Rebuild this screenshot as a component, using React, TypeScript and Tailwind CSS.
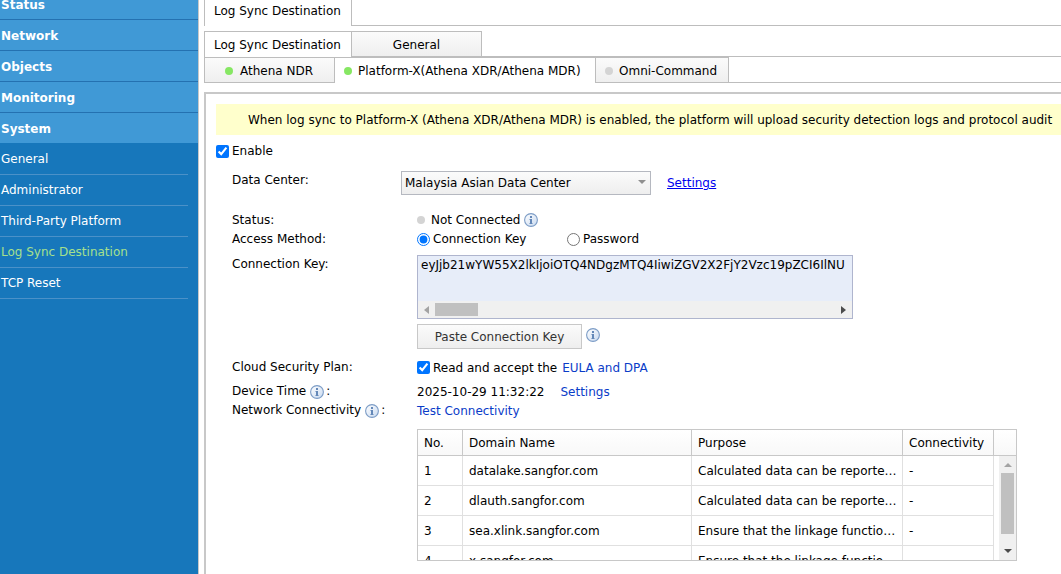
import type { ReactNode } from 'react'
import { clsx } from 'clsx'

const menus = ['Status', 'Network', 'Objects', 'Monitoring', 'System']

const subMenus = [
  'General',
  'Administrator',
  'Third-Party Platform',
  'Log Sync Destination',
  'TCP Reset',
]

const domains = [
  { no: 1, name: 'datalake.sangfor.com', purpose: 'Calculated data can be reported here' },
  { no: 2, name: 'dlauth.sangfor.com', purpose: 'Calculated data can be reported here' },
  { no: 3, name: 'sea.xlink.sangfor.com', purpose: 'Ensure that the linkage functions work' },
  { no: 4, name: 'x.sangfor.com', purpose: 'Ensure that the linkage functions work' },
]

function Sidebar() {
  return (
    <aside className="w-[199px] shrink-0 border-r border-[#c8c8c8] bg-[#1777bb] text-white">
      <nav aria-label="Main menu">
        <ul className="-mt-3">
          {menus.map((item) => (
            <li key={item} className="h-[31px] border-t border-[#2471b1] bg-[#4099d6]">
              <a href="#" className="flex h-full items-center px-px pt-px font-bold">
                {item}
              </a>
            </li>
          ))}
        </ul>
        <ul className="mr-[10px] pt-px">
          {subMenus.map((item) => (
            <li key={item} className="h-[31px] border-b border-[#4b91c8]">
              <a
                href="#"
                className={clsx(
                  'flex h-full items-center px-px',
                  item === 'Log Sync Destination' && 'text-[#a5e08c]',
                )}
              >
                {item}
              </a>
            </li>
          ))}
        </ul>
      </nav>
    </aside>
  )
}

function Dot({ on }: { on?: boolean }) {
  return <span className={clsx('size-2 shrink-0 rounded-full', on ? 'bg-[#86e763]' : 'bg-[#d4d4d4]')} />
}

function InfoIcon() {
  return (
    <svg viewBox="0 0 14 14" className="size-[14px] shrink-0" aria-hidden="true">
      <defs>
        <linearGradient id="info-fill" x1="0" y1="0" x2="1" y2="1">
          <stop offset="0" stopColor="#ffffff" />
          <stop offset="1" stopColor="#c9daf0" />
        </linearGradient>
      </defs>
      <circle cx="7" cy="7" r="6.4" fill="url(#info-fill)" stroke="#7c9cc6" strokeWidth="1.1" />
      <rect x="6" y="3" width="2" height="2" fill="#6488b8" />
      <path d="M5.5 6H8v4h.5v1h-3v-1H6V7h-.5z" fill="#6488b8" />
    </svg>
  )
}

function Row({ label, className, children }: { label: ReactNode; className?: string; children: ReactNode }) {
  return (
    <div className={clsx('flex', className)}>
      <div className="flex w-[185px] shrink-0 items-center self-start leading-[19px]">{label}</div>
      {children}
    </div>
  )
}

function InfoLabel({ text }: { text: string }) {
  return (
    <>
      <span className="mr-1">{text}</span>
      <InfoIcon />
      <span className="ml-[2px]">:</span>
    </>
  )
}

function Tabs() {
  const idle = 'border-b border-[#bdbdbd] bg-linear-to-b from-[#fbfbfb] to-[#efefef]'

  return (
    <div>
      <div className="flex h-[26px]">
        <div className="w-[148px] border-x border-[#bdbdbd] pl-[9px] leading-[22px]">Log Sync Destination</div>
        <div className="flex-1 border-b border-[#bdbdbd]" />
      </div>
      <div className="mt-[5px] flex h-[26px]" role="tablist">
        <button role="tab" aria-selected className="w-[147px] border-t border-l border-[#bdbdbd] pl-[9px] text-left">
          Log Sync Destination
        </button>
        <button role="tab" aria-selected={false} className={clsx('w-[131px] border-x border-t pt-px', idle)}>
          General
        </button>
        <div className="flex-1 border-b border-[#bdbdbd]" />
      </div>
      <div className="flex h-[26px]" role="tablist">
        <button
          role="tab"
          aria-selected={false}
          className={clsx('flex w-[131px] items-center gap-[7px] border-x border-t pt-px pl-5', idle)}
        >
          <Dot on />
          Athena NDR
        </button>
        <button
          role="tab"
          aria-selected
          className="flex w-[260px] items-center gap-[6px] border-t border-[#bdbdbd] pl-[9px] whitespace-nowrap"
        >
          <Dot on />
          Platform-X(Athena XDR/Athena MDR)
        </button>
        <button
          role="tab"
          aria-selected={false}
          className={clsx('flex w-[134px] items-center gap-[6px] border-x border-t pt-px pl-[9px]', idle)}
        >
          <Dot />
          Omni-Command
        </button>
        <div className="flex-1 border-b border-[#bdbdbd]" />
      </div>
    </div>
  )
}

function ConnectionKey() {
  return (
    <div className="w-[436px] border border-[#afb5ce] bg-[#e7edf9]">
      <textarea
        id="connection-key"
        wrap="off"
        rows={1}
        readOnly
        className="block h-[45px] w-full resize-none overflow-hidden bg-transparent pl-[3px] text-[12px] leading-[18px] outline-none"
        defaultValue="eyJjb21wYW55X2lkIjoiOTQ4NDgzMTQ4IiwiZGV2X2FjY2Vzc19pZCI6IlNU"
      />
      <div className="flex h-[17px] items-center bg-[#f0f0f0] px-[6px]">
        <svg viewBox="0 0 5 8" className="h-2 w-[5px]" aria-hidden="true">
          <path d="M5 0v8L0 4z" fill="#a3a3a3" />
        </svg>
        <div className="ml-[6px] h-[13px] w-[43px] bg-[#c0c0c0]" />
        <svg viewBox="0 0 5 8" className="ml-auto h-2 w-[5px]" aria-hidden="true">
          <path d="M0 0v8l5-4z" fill="#4c4c4c" />
        </svg>
      </div>
    </div>
  )
}

function DomainTable() {
  const head = 'border-r border-b border-[#c8c8c8] pt-px pl-[6px] text-left font-normal'
  const cell = 'truncate border-r border-b border-[#e0e0e0] pl-[6px]'

  return (
    <div className="flex h-[132px] w-[600px] overflow-hidden border border-[#c8c8c8]">
      <table className="w-[576px] table-fixed border-separate border-spacing-0 self-start">
        <colgroup>
          <col className="w-[45px]" />
          <col className="w-[229px]" />
          <col className="w-[211px]" />
          <col className="w-[91px]" />
        </colgroup>
        <thead>
          <tr className="h-[26px] bg-linear-to-b from-white to-[#f8f8f8]">
            <th className={head}>No.</th>
            <th className={head}>Domain Name</th>
            <th className={head}>Purpose</th>
            <th className={head}>Connectivity</th>
          </tr>
        </thead>
        <tbody>
          {domains.map((d) => (
            <tr key={d.no} className="h-[30px]">
              <td className={cell}>{d.no}</td>
              <td className={cell}>{d.name}</td>
              <td className={cell}>{d.purpose}</td>
              <td className={cell}>-</td>
            </tr>
          ))}
        </tbody>
      </table>
      <div className="flex flex-1 flex-col">
        <div className="h-[26px] shrink-0 border-b border-[#c8c8c8] bg-linear-to-b from-white to-[#f8f8f8]" />
        <div className="ml-auto flex w-[17px] flex-1 flex-col items-center bg-[#f0f0f0] py-[7px]">
          <svg viewBox="0 0 8 4" className="h-1 w-2" aria-hidden="true">
            <path d="M0 4h8L4 0z" fill="#a3a3a3" />
          </svg>
          <div className="mt-[6px] h-[61px] w-[13px] bg-[#c0c0c0]" />
          <svg viewBox="0 0 8 4" className="mt-auto h-1 w-2" aria-hidden="true">
            <path d="M0 0h8L4 4z" fill="#4c4c4c" />
          </svg>
        </div>
      </div>
    </div>
  )
}

export default function App() {
  return (
    <div className="flex h-screen overflow-hidden bg-white font-['Verdana','DejaVu_Sans',sans-serif] text-[12px] leading-[18px] text-black">
      <Sidebar />
      <main className="min-w-0 flex-1 pl-[5px]">
        <Tabs />
        <section className="mt-[9px] h-full border-t-2 border-l-2 border-[#c8c8c8] pt-[10px] pl-[10px]">
          <p className="h-[31px] overflow-hidden bg-[#ffffcc] pl-8 leading-8 whitespace-nowrap">
            When log sync to Platform-X (Athena XDR/Athena MDR) is enabled, the platform will upload security
            detection logs and protocol audit
          </p>
          <label className="flex h-8 items-center gap-[3px]">
            <input type="checkbox" defaultChecked className="size-[13px]" />
            Enable
          </label>

          <div className="pl-4">
            <div className="flex h-11 pt-1">
              <label htmlFor="data-center" className="w-[169px] shrink-0">
                Data Center:
              </label>
              <div className="relative h-6 w-[250px]">
                <select
                  id="data-center"
                  className="size-full appearance-none border border-[#b5b8c0] bg-linear-to-b from-[#fbfbfb] to-[#eeeeee] px-[3px]"
                >
                  <option>Malaysia Asian Data Center</option>
                </select>
                <svg
                  viewBox="0 0 8 4"
                  className="pointer-events-none absolute top-[9px] right-[5px] h-1 w-2"
                  aria-hidden="true"
                >
                  <path d="M0 0h8L4 4z" fill="#8f8f8f" />
                </svg>
              </div>
              <a href="#" className="ml-4 leading-6 text-[#0000ee] underline">
                Settings
              </a>
            </div>

            <Row label="Status:">
              <div className="flex h-[18px] items-center">
                <Dot />
                <span className="mr-1 ml-[6px]">Not Connected</span>
                <InfoIcon />
              </div>
            </Row>
            <Row label="Access Method:" className="h-[25px]">
              <div className="flex h-[18px]">
                <label className="flex w-[150px] items-center gap-[3px]">
                  <input type="radio" name="method" defaultChecked className="size-[13px]" />
                  Connection Key
                </label>
                <label className="flex items-center gap-[3px]">
                  <input type="radio" name="method" className="size-[13px]" />
                  Password
                </label>
              </div>
            </Row>
            <Row label={<label htmlFor="connection-key">Connection Key:</label>}>
              <div>
                <ConnectionKey />
                <div className="mt-[5px] flex items-start gap-1">
                  <button className="h-[25px] w-[165px] border border-[#c8c8c8] bg-linear-to-b from-[#fbfbfb] to-[#eeeeee] text-[#333333]">
                    Paste Connection Key
                  </button>
                  <span className="pt-1">
                    <InfoIcon />
                  </span>
                </div>
              </div>
            </Row>
            <Row label="Cloud Security Plan:" className="mt-[9px] h-6">
              <div className="flex h-[19px] items-center">
                <label className="flex items-center gap-[3px]">
                  <input type="checkbox" defaultChecked className="size-[13px]" />
                  Read and accept the
                </label>
                <a href="#" className="ml-[5px] text-[#0a3cc8]">
                  EULA and DPA
                </a>
              </div>
            </Row>
            <Row label={<InfoLabel text="Device Time" />}>
              <div className="flex gap-4 pt-px">
                <span>2025-10-29 11:32:22</span>
                <a href="#" className="text-[#0a3cc8]">
                  Settings
                </a>
              </div>
            </Row>
            <Row label={<InfoLabel text="Network Connectivity" />}>
              <a href="#" className="pt-px text-[#0a3cc8]">
                Test Connectivity
              </a>
            </Row>
            <div className="mt-[9px] pl-[185px]">
              <DomainTable />
            </div>
          </div>
        </section>
      </main>
    </div>
  )
}
